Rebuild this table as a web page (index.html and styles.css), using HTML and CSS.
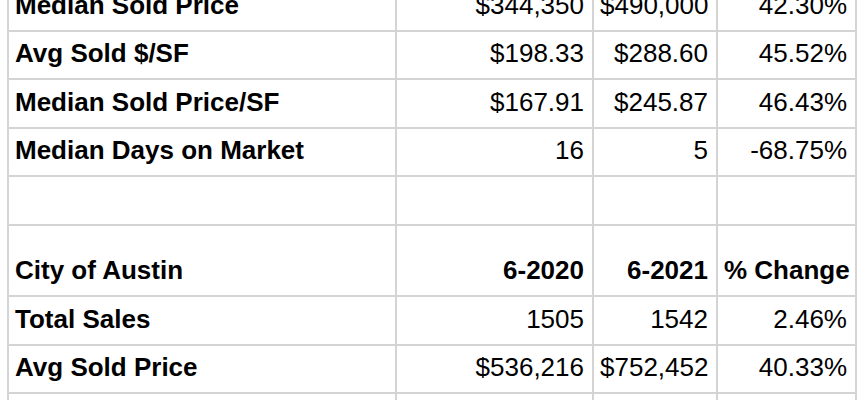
FILE: index.html
```html
<!DOCTYPE html>
<html>
<head>
<meta charset="utf-8">
<link rel="stylesheet" href="styles.css">
</head>
<body>
<table class="sheet">
  <colgroup>
    <col class="c-label">
    <col class="c-a">
    <col class="c-b">
    <col class="c-c">
  </colgroup>
  <tbody>
    <tr><td class="label">Median Sold Price</td><td>$344,350</td><td>$490,000</td><td>42.30%</td></tr>
    <tr><td class="label">Avg Sold $/SF</td><td>$198.33</td><td>$288.60</td><td>45.52%</td></tr>
    <tr><td class="label">Median Sold Price/SF</td><td>$167.91</td><td>$245.87</td><td>46.43%</td></tr>
    <tr><td class="label">Median Days on Market</td><td>16</td><td>5</td><td>-68.75%</td></tr>
    <tr><td class="label"></td><td></td><td></td><td></td></tr>
    <tr class="tall"><td class="label">City of Austin</td><td class="head">6-2020</td><td class="head">6-2021</td><td class="head">% Change</td></tr>
    <tr><td class="label">Total Sales</td><td>1505</td><td>1542</td><td>2.46%</td></tr>
    <tr><td class="label">Avg Sold Price</td><td>$536,216</td><td>$752,452</td><td>40.33%</td></tr>
    <tr><td class="label"></td><td></td><td></td><td></td></tr>
  </tbody>
</table>
</body>
</html>
```
FILE: styles.css
```css
html, body {
  margin: 0;
  padding: 0;
  background: #ffffff;
  overflow: hidden;
}

body {
  font-family: "Liberation Sans", Arial, Helvetica, sans-serif;
  font-size: 26px;
  color: #000000;
}

.sheet {
  border-collapse: collapse;
  table-layout: fixed;
  width: 850px;
  margin: -19px 0 0 7px;
}

.c-label { width: 388px; }
.c-a { width: 197px; }
.c-b { width: 124px; }
.c-c { width: 139px; }

.sheet tr {
  height: 48.6px;
}

.sheet tr.tall {
  height: 71px;
}

.sheet td {
  border: 2px solid #d4d4d4;
  padding: 0 8px 10px 6px;
  vertical-align: bottom;
  text-align: right;
  white-space: nowrap;
  line-height: 30px;
  overflow: hidden;
}

.sheet td.label {
  text-align: left;
  font-weight: bold;
}

.sheet td.head {
  font-weight: bold;
}
```
